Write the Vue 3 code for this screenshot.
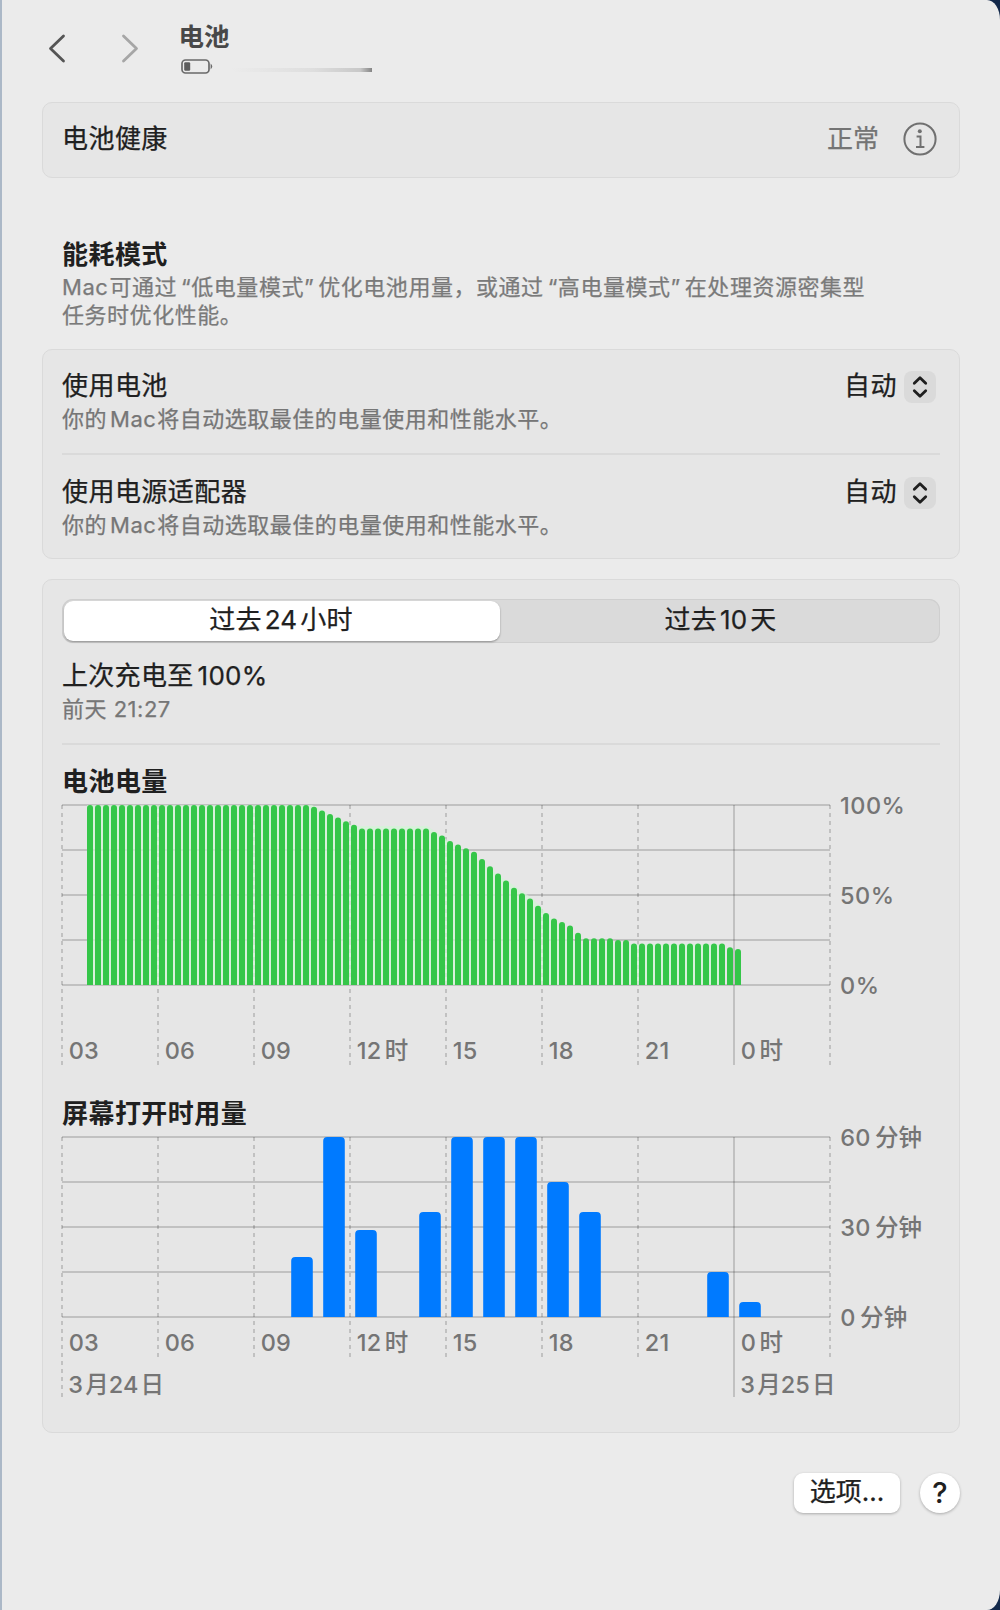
<script setup>
import { ref } from 'vue'

const currentRange = ref(0)

// every string is a list of runs, a small gap is put between them
const ranges = [
  ['过去', '24', '小时'],
  ['过去', '10', '天'],
]

const modes = [
  { title: '使用电池', value: '自动' },
  { title: '使用电源适配器', value: '自动' },
]
const modeHint = ['你的', 'Mac', '将自动选取最佳的电量使用和性能水平。']

// battery level, one value per 15 minutes
const levels = [
  ...Array(28).fill(100),
  99, 97, 95, 93, 91, 89,
  ...Array(9).fill(87),
  85, 83, 80, 78, 76, 74, 70, 66, 62, 58, 54, 51, 48, 44, 40, 37, 35, 33, 29,
  26, 26, 26, 26, 25, 25,
  ...Array(12).fill(23),
  21, 20,
]

// minutes of screen on time, by hour slot
const usage = [
  { slot: 7, minutes: 20 },
  { slot: 8, minutes: 60 },
  { slot: 9, minutes: 29 },
  { slot: 11, minutes: 35 },
  { slot: 12, minutes: 60 },
  { slot: 13, minutes: 60 },
  { slot: 14, minutes: 60 },
  { slot: 15, minutes: 45 },
  { slot: 16, minutes: 35 },
  { slot: 20, minutes: 15 },
  { slot: 21, minutes: 5 },
]

const hours = [
  ['03'],
  ['06'],
  ['09'],
  ['12', '时'],
  ['15'],
  ['18'],
  ['21'],
  ['0', '时'],
]

const levelAxis = [['100%'], ['50%'], ['0%']]
const usageAxis = [
  ['60', '分钟'],
  ['30', '分钟'],
  ['0', '分钟'],
]

const levelPath = (level, i) => {
  const x = 25 + i * 8
  const y = 181 - level * 1.8
  return `M${x} 181V${y + 3}a3 3 0 0 1 6 0V181z`
}

const usagePath = ({ slot, minutes }) => {
  const x = 5.2 + slot * 32
  const y = 181 - minutes * 3
  return `M${x} 181V${y + 4}q0 -4 4 -4h13.6q4 0 4 4V181z`
}
</script>

<template>
  <div class="screen">
    <main class="window">
      <header class="toolbar">
        <svg class="chevron" width="20" height="32" viewBox="0 0 20 32">
          <path d="M16.5 4 3.5 16.5 16.5 29" />
        </svg>
        <svg class="chevron next" width="20" height="32" viewBox="0 0 20 32">
          <path d="M3.5 4 16.5 16.5 3.5 29" />
        </svg>
        <div class="heading">
          <h1>电池</h1>
          <div class="status">
            <svg width="33" height="16" viewBox="0 0 33 16">
              <rect x="1" y="1" width="27" height="13" rx="3.5" fill="none" stroke="#6a6a6a" stroke-width="1.7" />
              <rect x="3.2" y="3.2" width="6" height="8.6" rx="1.2" fill="#5c5c5c" />
              <path d="M29.6 4.6q3.4 2.9 0 5.8z" fill="#6a6a6a" />
            </svg>
            <span class="trace"></span>
          </div>
        </div>
      </header>

      <section class="card health">
        <span class="label">电池健康</span>
        <span class="health-value">正常</span>
        <svg width="34" height="34" viewBox="0 0 34 34">
          <circle cx="17" cy="17" r="15.6" fill="none" stroke="#707070" stroke-width="2" />
          <circle cx="16.8" cy="9.2" r="2" fill="#707070" />
          <path d="M13.6 14.6h3.9v10.2M13 25h8.4" fill="none" stroke="#707070" stroke-width="2" />
        </svg>
      </section>

      <section class="intro">
        <h2>能耗模式</h2>
        <p>
          <span>Mac</span><span>可通过</span><span>“低电量模式”</span><span>优化电池用量，或通过</span><span>“高电量模式”</span><span>在处理资源密集型</span>
        </p>
        <p>任务时优化性能。</p>
      </section>

      <section class="card modes">
        <div v-for="mode in modes" :key="mode.title" class="mode">
          <div class="mode-text">
            <span class="label">{{ mode.title }}</span>
            <span class="hint"><span v-for="run in modeHint" :key="run">{{ run }}</span></span>
          </div>
          <div class="picker">
            <span class="label">{{ mode.value }}</span>
            <span class="stepper">
              <svg width="16" height="24" viewBox="0 0 16 24">
                <path d="M2.3 8.3 8 2.8 13.7 8.3M2.3 15.7 8 21.2 13.7 15.7" />
              </svg>
            </span>
          </div>
        </div>
      </section>

      <section class="card stats">
        <div class="segments">
          <button
            v-for="(range, i) in ranges"
            :key="i"
            :class="{ active: currentRange === i }"
            @click="currentRange = i"
          >
            <span v-for="run in range" :key="run">{{ run }}</span>
          </button>
        </div>

        <div class="last-charge">
          <span class="label"><span>上次充电至</span><span>100%</span></span>
          <span class="hint">前天 21:27</span>
        </div>

        <h2>电池电量</h2>
        <svg class="chart level-chart" width="878" height="270" viewBox="0 0 878 270">
          <path v-for="n in 5" :key="n" class="grid" :d="`M0 ${n * 45 - 44}H768`" />
          <template v-for="n in 9" :key="n">
            <path v-if="n === 8" class="grid" d="M672 1V261" />
            <path v-else class="grid dashed" :d="`M${(n - 1) * 96} 1V261`" />
          </template>
          <path class="level-glow" d="M25 181V1H250L290 22H365L470 94L515 140H660V181z" />
          <path v-for="(level, i) in levels" :key="i" class="level" :d="levelPath(level, i)" />
          <text v-for="(hour, i) in hours" :key="i" :x="i * 96 + 6.8" y="255">
            <tspan v-for="(run, j) in hour" :key="j" :dx="j ? 3.5 : 0">{{ run }}</tspan>
          </text>
          <text v-for="(mark, i) in levelAxis" :key="i" class="percent" x="778" :y="i * 90 + 10">{{ mark[0] }}</text>
        </svg>

        <h2>屏幕打开时用量</h2>
        <svg class="chart" width="878" height="270" viewBox="0 0 878 270">
          <path v-for="n in 5" :key="n" class="grid" :d="`M0 ${n * 45 - 44}H768`" />
          <template v-for="n in 9" :key="n">
            <path v-if="n === 8" class="grid" d="M672 1V261" />
            <path v-else class="grid dashed" :d="`M${(n - 1) * 96} 1V${n === 1 ? 261 : 221}`" />
          </template>
          <path v-for="item in usage" :key="item.slot" class="usage" :d="usagePath(item)" />
          <text v-for="(hour, i) in hours" :key="i" :x="i * 96 + 6.8" y="215">
            <tspan v-for="(run, j) in hour" :key="j" :dx="j ? 3.5 : 0">{{ run }}</tspan>
          </text>
          <text x="6.3" y="257">3<tspan dx="2">月</tspan>24<tspan dx="2">日</tspan></text>
          <text x="678.3" y="257">3<tspan dx="2">月</tspan>25<tspan dx="2">日</tspan></text>
          <text v-for="(mark, i) in usageAxis" :key="i" x="778.3" :y="i * 90 + 10">
            <tspan v-for="(run, j) in mark" :key="j" :dx="j ? 4.5 : 0">{{ run }}</tspan>
          </text>
        </svg>
      </section>

      <footer class="actions">
        <button class="options">选项...</button>
        <button class="help">?</button>
      </footer>
    </main>
  </div>
</template>

<style>
body {
  background-color: #10233f;
}
</style>

<style scoped>
* {
  box-sizing: border-box;
}
.screen {
  height: 1610px;
  padding-left: 2px;
  background: linear-gradient(90deg, #abb8c7 50%, #12284a 50%);
  font-family: Inter, 'Noto Sans CJK SC', sans-serif;
  color: #202020;
}
.window {
  height: 1610px;
  padding: 0 40px;
  background-color: #ebebeb;
  border-radius: 0 13px 13px 0 / 0 20px 20px 0;
  display: flex;
  flex-direction: column;
}
h1,
h2,
p {
  margin: 0;
}
h2 {
  font-size: 26px;
  line-height: 32px;
  font-weight: 700;
  letter-spacing: 0.45px;
}
button {
  border: none;
  padding: 0;
  font-family: inherit;
  color: inherit;
}

.toolbar {
  height: 102px;
  padding: 20px 0 0 5px;
  display: flex;
  align-items: flex-start;
}
.chevron {
  margin-top: 12px;
  fill: none;
  stroke: #555;
  stroke-width: 2.8;
  stroke-linecap: round;
  stroke-linejoin: round;
}
.chevron.next {
  margin-left: 53px;
  stroke: #a6a6a6;
}
.heading {
  margin-left: 38.5px;
}
h1 {
  font-size: 25.5px;
  line-height: 34px;
  font-weight: 700;
  color: #484848;
}
.status {
  margin: 5px 0 0 2px;
  display: flex;
  align-items: center;
}
.trace {
  width: 148px;
  height: 4px;
  margin: 5px 0 0 10px;
  background: linear-gradient(90deg, #ebebeb 5%, #dedede 60%, #c8c8c8 92%, #858585);
  filter: blur(0.6px);
}

.card {
  flex: none;
  background-color: #e6e6e6;
  border: 1px solid #dadada;
  border-radius: 10px;
}
.label {
  font-size: 26px;
  line-height: 32px;
  letter-spacing: 0.45px;
}
.label,
.hint,
.health-value,
.intro p,
.segments button,
.options {
  -webkit-text-stroke: 0.25px currentColor;
}
.hint {
  font-size: 22px;
  line-height: 28px;
  letter-spacing: 0.5px;
  color: #767676;
}
.hint span + span {
  margin-left: 3px;
}
.hint span:nth-child(3) {
  margin-left: 1px;
}
.label span + span,
.intro span + span {
  margin-left: 4px;
}
.segments span + span {
  margin-left: 3px;
}
.intro span:nth-child(2) {
  margin-left: 1px;
}

.health {
  height: 76px;
  padding: 0 22px 3px 19px;
  display: flex;
  align-items: center;
}
.health .label {
  padding-top: 1px;
}
.health-value {
  margin: 0 24px 0 auto;
  font-size: 26px;
  line-height: 32px;
  color: #747474;
}

.intro {
  padding: 61px 20px 0;
  height: 171px;
}
.intro h2 {
  margin-bottom: 2px;
}
.intro p {
  font-size: 22px;
  line-height: 28px;
  letter-spacing: 0.54px;
  color: #7a7a7a;
  white-space: nowrap;
}

.modes {
  height: 210px;
  padding: 0 19px;
}
.mode {
  display: flex;
  justify-content: space-between;
  height: 105px;
  padding-top: 20px;
}
.mode:first-child {
  height: 103px;
}
.mode + .mode {
  border-top: 2px solid #dadada;
  padding-top: 21px;
}
.mode-text,
.last-charge {
  display: flex;
  flex-direction: column;
  gap: 3px;
}
.picker {
  display: flex;
  gap: 7px;
  margin-right: 4px;
}
.stepper {
  width: 32px;
  height: 32px;
  margin-top: 1px;
  border-radius: 8px;
  background-color: #dadada;
  display: flex;
  align-items: center;
  justify-content: center;
}
.stepper path {
  fill: none;
  stroke: #1e1e1e;
  stroke-width: 2.8;
  stroke-linecap: round;
  stroke-linejoin: round;
}

.stats {
  height: 854px;
  margin-top: 20px;
  padding: 19px 19px 0;
}
.segments {
  height: 44px;
  padding: 2px;
  display: flex;
  background-color: #dadada;
  border-radius: 11px;
  box-shadow: inset 0 0 0 1px #cfcfcf;
}
.segments button {
  flex: 1;
  background: none;
  border-radius: 9px;
  font-size: 26px;
  line-height: 36px;
  letter-spacing: 0.2px;
  padding: 0 0 2px 3px;
}
.segments button.active {
  flex: none;
  width: 436px;
  padding: 0 2px 2px 0;
  background-color: #fff;
  box-shadow: 0 1px 2px rgba(0, 0, 0, 0.35);
}
.last-charge {
  height: 102px;
  padding-top: 17px;
  margin-bottom: 21px;
  border-bottom: 2px solid #dadada;
}
.last-charge .label {
  letter-spacing: 0.3px;
}

.chart {
  display: block;
  overflow: visible;
  margin-top: 6px;
}
.level-chart {
  margin-bottom: 24px;
}
.grid {
  fill: none;
  stroke: rgba(0, 0, 0, 0.16);
  stroke-width: 2;
}
.dashed {
  stroke-dasharray: 4 4;
}
.level-glow {
  fill: #d2f5d6;
  opacity: 0.7;
}
.level {
  fill: #35c649;
}
.usage {
  fill: #007aff;
}
.chart text {
  font-size: 23.5px;
  font-weight: 500;
  fill: #757575;
  letter-spacing: 0.1px;
}
.chart .percent {
  letter-spacing: 0.5px;
}

.actions {
  display: flex;
  justify-content: flex-end;
  gap: 20px;
  margin-top: 40px;
}
.options,
.help {
  height: 40px;
  background-color: #fff;
  box-shadow: 0 1px 3px rgba(0, 0, 0, 0.28);
}
.options {
  width: 106px;
  padding-bottom: 3px;
  border-radius: 9px;
  font-size: 26px;
  line-height: 36px;
}
.help {
  width: 40px;
  border-radius: 50%;
  font-size: 29px;
  font-weight: 500;
  line-height: 40px;
}
</style>
